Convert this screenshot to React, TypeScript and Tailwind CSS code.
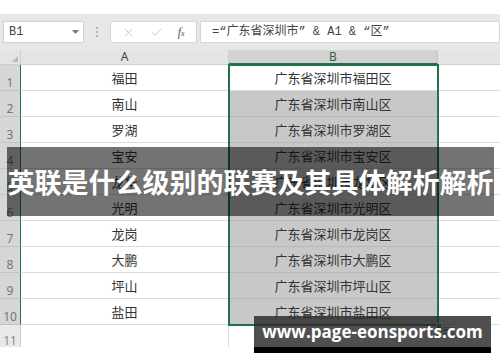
import React from 'react';
import { X, Check } from 'lucide-react';

const cjk = "font-['Noto_Sans_CJK_SC','Noto_Sans',sans-serif]";

const districts = ['福田', '南山', '罗湖', '宝安', '龙华', '光明', '龙岗', '大鹏', '坪山', '盐田'];

export default function App() {
  return (
    <div className={`relative w-[500px] h-[362px] overflow-hidden bg-white ${cjk}`}>
      <div className="h-[14px] bg-white" />

      {/* formula bar */}
      <div className="h-[36px] bg-[#e7e7e7] flex items-center">
        <div className="ml-[3px] w-[81px] h-[22px] bg-white border border-[#d0d0d0] flex items-center justify-between pl-[5px] pr-[4px]">
          <span className="font-['Liberation_Mono',monospace] text-[12px] text-[#444]">B1</span>
          <svg width="7" height="4" viewBox="0 0 7 4">
            <path d="M0 0h7L3.5 4z" fill="#777" />
          </svg>
        </div>
        <div className="w-[26px] flex flex-col items-center gap-[2px]">
          <span className="w-[2px] h-[2px] bg-[#b4b4b4]" />
          <span className="w-[2px] h-[2px] bg-[#b4b4b4]" />
          <span className="w-[2px] h-[2px] bg-[#b4b4b4]" />
        </div>
        <div className="w-[87px] h-[22px] bg-white border border-[#d8d8d8] flex items-center justify-around px-[4px]">
          <X size={13} strokeWidth={1.4} color="#b8b8b8" />
          <Check size={13} strokeWidth={1.4} color="#b8b8b8" />
          <span className="font-['Liberation_Serif',serif] italic text-[12px] text-[#555] leading-none">
            f<span className="text-[8px]">x</span>
          </span>
        </div>
        <div className="ml-[3px] flex-1 h-[22px] bg-white border border-[#d8d8d8] flex items-center pl-[11px]">
          <span className="font-['Liberation_Mono','Noto_Sans_CJK_SC',monospace] text-[12px] text-[#444] whitespace-nowrap">
            =“广东省深圳市” &amp; A1 &amp; “区”
          </span>
        </div>
      </div>

      {/* sheet */}
      <div className="relative grid grid-cols-[21px_208px_209px_62px]">
        {/* header row */}
        <div className="h-[15px] bg-[#e4e4e4] border-r border-b border-[#cfcfcf] flex items-end justify-end pr-[2px] pb-[2px]">
          <svg width="6" height="6" viewBox="0 0 6 6">
            <path d="M6 0v6H0z" fill="#b8b8b8" />
          </svg>
        </div>
        <div className="h-[15px] bg-[#e4e4e4] border-r border-b border-[#cfcfcf] flex items-center justify-center text-[12px] leading-none text-[#444] font-['Noto_Sans',sans-serif]">A</div>
        <div className="h-[15px] bg-[#d2d2d2] border-r border-b-2 border-r-[#c4c4c4] border-b-[#217346] flex items-center justify-center text-[12px] leading-none text-[#3d5d49] font-['Noto_Sans',sans-serif]">B</div>
        <div className="h-[15px] bg-[#e4e4e4] border-b border-[#cfcfcf]" />

        {districts.map((d, i) => (
          <React.Fragment key={d}>
            <div className="h-[26px] bg-[#d6d6d6] border-b border-[#c4c4c4] border-r border-r-[#217346] flex items-end justify-center pb-[1px] text-[12px] leading-none text-[#667d6f] font-['Noto_Sans',sans-serif]">
              {i + 1}
            </div>
            <div className="h-[26px] border-r border-b border-[#dcdcdc] flex items-center justify-center text-[13px] text-[#333]">
              {d}
            </div>
            <div
              className={`h-[26px] border-r border-b flex items-center justify-center text-[13px] text-[#333] ${
                i === 0 ? 'bg-white border-[#dcdcdc]' : 'bg-[#c8c8c8] border-[#b8b8b8]'
              }`}
            >
              广东省深圳市{d}区
            </div>
            <div className="h-[26px] border-b border-[#dcdcdc]" />
          </React.Fragment>
        ))}

        <div className="h-[22px] bg-[#e9e9e9] border-r border-[#cfcfcf] flex items-end justify-center text-[12px] leading-none text-[#8a8a8a] font-['Noto_Sans',sans-serif]">
          11
        </div>
        <div className="h-[22px] border-r border-[#dcdcdc]" />
        <div className="h-[22px] border-r border-[#dcdcdc]" />
        <div className="h-[22px]" />

        {/* selection border B1:B10 */}
        <div className="absolute left-[228px] top-[14px] w-[211px] h-[262px] border-2 border-[#217346] pointer-events-none" />
        <div className="absolute left-[436px] top-[273px] w-[6px] h-[6px] bg-[#217346] border border-white" />
        <div className="absolute left-[442px] top-[277px] w-[12px] h-[7px] bg-[#eef2f8] border border-[#9aa9c0] flex items-start p-[1px]">
          <span className="w-[5px] h-[2px] bg-[#3b6db5]" />
        </div>
      </div>

      {/* title overlay */}
      <div className="absolute left-[7px] top-[147px] w-[487px] h-[69px] bg-black/55 flex items-center justify-center">
        <span className="text-white font-bold text-[27px] leading-none whitespace-nowrap">英联是什么级别的联赛及其具体解析解析</span>
      </div>

      {/* watermark */}
      <div className="absolute left-[254px] top-[316px] w-[237px] flex flex-col">
        <div className="h-[31px] bg-[rgba(40,40,40,0.82)] flex items-center justify-center">
          <span className="font-['Open_Sans',sans-serif] font-bold text-[17px] leading-none text-white whitespace-nowrap">www.page-eonsports.com</span>
        </div>
        <div className="h-[6px] bg-black" />
      </div>
    </div>
  );
}
